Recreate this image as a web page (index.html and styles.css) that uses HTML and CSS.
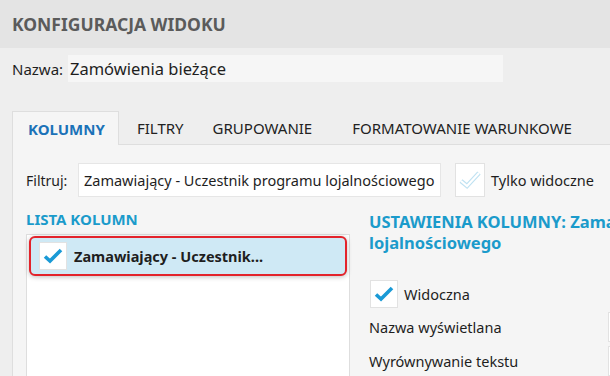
FILE: index.html
```html
<!DOCTYPE html>
<html lang="pl">
<head>
    <meta charset="UTF-8">
    <title>Konfiguracja widoku</title>
    <link rel="stylesheet" href="styles.css">
</head>
<body>
    <div class="header">
        <h1>KONFIGURACJA WIDOKU</h1>
    </div>

    <div class="name-row">
        <label>Nazwa:</label>
        <div class="name-input">Zamówienia bieżące</div>
    </div>

    <div class="tabs-wrap">
        <div class="tabs">
            <div class="tab active">KOLUMNY</div>
            <div class="tab tab-filters">FILTRY</div>
            <div class="tab tab-group">GRUPOWANIE</div>
            <div class="tab tab-format">FORMATOWANIE WARUNKOWE</div>
        </div>

        <div class="tab-panel">
            <div class="filter-row">
                <label>Filtruj:</label>
                <div class="filter-input">Zamawiający - Uczestnik programu lojalnościowego</div>
                <div class="checkbox faded">
                    <svg width="24" height="20" viewBox="0 0 24 20">
                        <path d="M3 11 L9 16 L21 3" fill="none" stroke="#bfe2f2" stroke-width="4.5" stroke-linejoin="miter"/>
                        <path d="M3 11 L9 16 L21 3" fill="none" stroke="#ffffff" stroke-width="2.2" stroke-linejoin="miter"/>
                    </svg>
                </div>
                <span class="check-label">Tylko widoczne</span>
            </div>

            <div class="columns">
                <div class="list-col">
                    <h2>LISTA KOLUMN</h2>
                    <div class="list-box">
                        <div class="list-item selected">
                            <div class="checkbox">
                                <svg width="20" height="16" viewBox="0 0 20 16">
                                    <path d="M2 8.5 L7 13 L18 2" fill="none" stroke="#1a9ad6" stroke-width="3.6"/>
                                </svg>
                            </div>
                            <span>Zamawiający - Uczestnik...</span>
                        </div>
                    </div>
                </div>

                <div class="settings-col">
                    <h2>USTAWIENIA KOLUMNY: Zamawiający - Uczestnik programu lojalnościowego</h2>
                    <div class="check-row">
                        <div class="checkbox">
                            <svg width="20" height="16" viewBox="0 0 20 16">
                                <path d="M2 8.5 L7 13 L18 2" fill="none" stroke="#1a9ad6" stroke-width="3.6"/>
                            </svg>
                        </div>
                        <span>Widoczna</span>
                    </div>
                    <div class="field-row">
                        <label>Nazwa wyświetlana</label>
                        <div class="field-input"></div>
                    </div>
                    <div class="field-row">
                        <label>Wyrównywanie tekstu</label>
                        <div class="field-input"></div>
                    </div>
                </div>
            </div>
        </div>
    </div>
</body>
</html>
```

FILE: styles.css
```css
:root {
    --bg: #eeeeee;
    --header: #e4e4e4;
    --panel: #f5f5f5;
    --border: #dedede;
    --text: #1e1e1e;
    --title: #5b5b5b;
    --tab-blue: #1b72b8;
    --heading-blue: #1b9bcb;
}

* {
    margin: 0;
    padding: 0;
    box-sizing: border-box;
    font-family: 'Noto Sans', 'Open Sans', sans-serif;
}

body {
    width: 610px;
    height: 376px;
    overflow: hidden;
    background-color: var(--bg);
    color: var(--text);
    font-size: 14px;
}

.header {
    height: 48px;
    background-color: var(--header);
    display: flex;
    align-items: center;
    padding-left: 12px;
    padding-bottom: 1px;
}

.header h1 {
    font-size: 17.5px;
    font-weight: 700;
    color: var(--title);
}

.name-row {
    display: flex;
    align-items: center;
    padding: 7px 0 0 12px;
    height: 34px;
}

.name-row label {
    width: 56px;
    flex-shrink: 0;
    font-size: 15px;
}

.name-input {
    width: 435px;
    height: 27px;
    line-height: 27px;
    background-color: #f6f6f6;
    padding-left: 2px;
    font-size: 16.5px;
}

.tabs-wrap {
    margin: 29px 0 0 12px;
}

.tabs {
    display: flex;
    height: 34px;
    border-bottom: 1px solid var(--border);
}

.tab {
    display: flex;
    align-items: center;
    font-size: 15px;
    color: #222;
    white-space: nowrap;
}

.tab.active {
    width: 107px;
    padding-left: 15px;
    font-weight: 700;
    color: var(--tab-blue);
    background-color: var(--panel);
    border: 1px solid var(--border);
    border-bottom: none;
    margin-bottom: -1px;
}

.tab-filters {
    margin-left: 18px;
}

.tab-group {
    margin-left: 29px;
}

.tab-format {
    margin-left: 40px;
}

.tab-panel {
    background-color: var(--panel);
    border-left: 1px solid var(--border);
    height: 300px;
    padding: 18px 0 0 13px;
}

.filter-row {
    display: flex;
    align-items: center;
    height: 34px;
}

.filter-row label {
    width: 52px;
    font-size: 14px;
}

.filter-input {
    width: 363px;
    height: 34px;
    line-height: 32px;
    background-color: #fff;
    border: 1px solid #e6e6e6;
    padding-left: 5px;
    font-size: 14.5px;
    white-space: nowrap;
    overflow: hidden;
}

.checkbox {
    width: 28px;
    height: 28px;
    background-color: #fff;
    border: 1px solid #e2e2e2;
    display: flex;
    align-items: center;
    justify-content: center;
    flex-shrink: 0;
}

.checkbox.faded {
    width: 30px;
    height: 34px;
    margin-left: 14px;
}

.check-label {
    margin-left: 6px;
    font-size: 14.5px;
}

.columns {
    display: flex;
    margin-top: 12px;
}

h2 {
    font-size: 16.5px;
    font-weight: 700;
    color: var(--heading-blue);
    line-height: 21px;
}

.list-col {
    width: 324px;
    flex-shrink: 0;
}

.list-col h2 {
    font-size: 15px;
    margin-bottom: 4px;
}

.list-box {
    height: 160px;
    background-color: #fff;
    border: 1px solid var(--border);
    padding: 1px 2px;
}

.list-item {
    display: flex;
    align-items: center;
    height: 40px;
    padding-left: 8px;
    font-weight: 700;
    font-size: 14.5px;
}

.list-item.selected {
    background-color: #cfe9f5;
    border: 2px solid #e3232b;
    border-radius: 6px;
    box-shadow: 0 1px 5px rgba(0, 0, 0, 0.25);
}

.list-item span {
    margin-left: 7px;
}

.settings-col {
    width: 500px;
    flex-shrink: 0;
    margin-left: 19px;
    padding-top: 2px;
}

.check-row {
    display: flex;
    align-items: center;
    margin-top: 27px;
    padding-left: 1px;
}

.check-row span {
    margin-left: 6px;
    font-size: 14.5px;
}

.field-row {
    display: flex;
    align-items: center;
    height: 30px;
    margin-top: 4px;
}

.field-row label {
    width: 239px;
    flex-shrink: 0;
    font-size: 14.5px;
}

.field-input {
    width: 200px;
    height: 30px;
    background-color: #fff;
    border: 1px solid #e2e2e2;
}
```
